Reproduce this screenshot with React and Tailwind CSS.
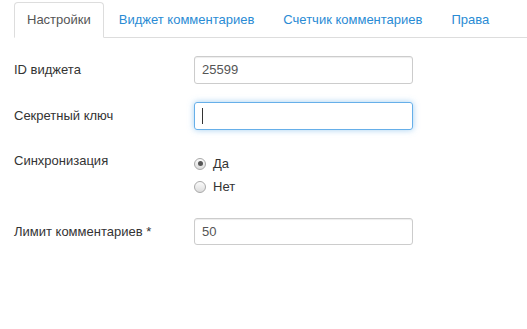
import React from "react";

function Radio({ checked, label }) {
  return (
    <label className="flex items-center h-[23px] gap-[7px]">
      <span className="relative w-[12px] h-[12px] rounded-full border border-[#a9a9a9] bg-gradient-to-b from-[#fbfbfb] to-[#dcdcdc] flex items-center justify-center">
        {checked && <span className="w-[5px] h-[5px] rounded-full bg-[#555]" />}
      </span>
      <span className="text-[13px] text-[#333]">{label}</span>
    </label>
  );
}

export default function App() {
  return (
    <div className="w-[527px] h-[329px] bg-white overflow-hidden" style={{ fontFamily: '"Liberation Sans", Arial, sans-serif' }}>
      <div className="pl-[14px] pt-[2px]">
        <div className="flex border-b border-[#ddd] text-[13px]">
          <div className="h-[36px] px-[12px] flex items-center border border-[#ddd] border-b-white rounded-t-[4px] -mb-px bg-white text-[#555] mr-[1px]">
            Настройки
          </div>
          <div className="h-[35px] px-[14px] flex items-center text-[#2a8bd4] mr-[1px]">Виджет комментариев</div>
          <div className="h-[35px] px-[14px] flex items-center text-[#2a8bd4] mr-[1px]">Счетчик комментариев</div>
          <div className="h-[35px] px-[14px] flex items-center text-[#2a8bd4]">Права</div>
        </div>

        <div className="pt-[18px] text-[13px] text-[#333]">
          <div className="flex items-center">
            <div className="w-[180px]">ID виджета</div>
            <div className="w-[219px] h-[28px] border border-[#ccc] rounded-[3px] px-[7px] flex items-center text-[#555] shadow-[inset_0_1px_1px_rgba(0,0,0,0.075)]">25599</div>
          </div>
          <div className="flex items-center mt-[18px]">
            <div className="w-[180px]">Секретный ключ</div>
            <div className="w-[219px] h-[28px] border border-[#66afe9] rounded-[3px] px-[7px] flex items-center shadow-[0_0_6px_rgba(102,175,233,0.6)]">
              <span className="w-px h-[16px] bg-[#333]" />
            </div>
          </div>
          <div className="flex mt-[22px]">
            <div className="w-[180px] h-[20px] leading-[20px] -mt-[1px]">Синхронизация</div>
            <div className="flex flex-col">
              <Radio checked label="Да" />
              <Radio label="Нет" />
            </div>
          </div>
          <div className="flex items-center mt-[20px]">
            <div className="w-[180px]">Лимит комментариев *</div>
            <div className="w-[219px] h-[27px] border border-[#ccc] rounded-[3px] px-[7px] flex items-center text-[#555] shadow-[inset_0_1px_1px_rgba(0,0,0,0.075)]">50</div>
          </div>
        </div>
      </div>
    </div>
  );
}
